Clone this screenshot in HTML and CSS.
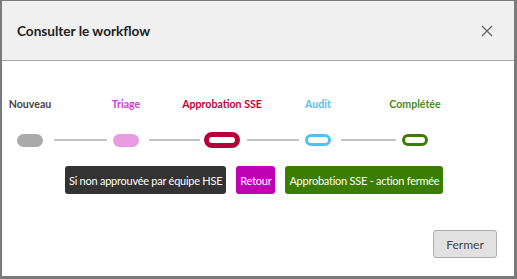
FILE: index.html
```html
<!DOCTYPE html>
<html lang="fr">
<head>
<meta charset="utf-8">
<title>Consulter le workflow</title>
<link rel="stylesheet" href="styles.css">
</head>
<body>
<div class="modal">
  <div class="modal-header">
    <h1 class="modal-title">Consulter le workflow</h1>
    <button class="close" aria-label="Fermer">
      <svg width="12" height="12" viewBox="0 0 12 12"><path d="M1 1L11 11M11 1L1 11" stroke="#666" stroke-width="1.3" fill="none"/></svg>
    </button>
  </div>
  <div class="modal-body">
    <div class="track">
      <div class="step">
        <span class="label c-new">Nouveau</span>
        <span class="pill-box"><span class="pill p-new"></span></span>
      </div>
      <span class="line l1"></span>
      <div class="step">
        <span class="label c-triage">Triage</span>
        <span class="pill-box"><span class="pill p-triage"></span></span>
      </div>
      <span class="line l2"></span>
      <div class="step step-active">
        <span class="label c-sse">Approbation SSE</span>
        <span class="pill-box"><span class="pill p-sse"></span></span>
      </div>
      <span class="line l3"></span>
      <div class="step">
        <span class="label c-audit">Audit</span>
        <span class="pill-box"><span class="pill p-audit"></span></span>
      </div>
      <span class="line l4"></span>
      <div class="step">
        <span class="label c-done">Complétée</span>
        <span class="pill-box"><span class="pill p-done"></span></span>
      </div>
    </div>
    <div class="actions">
      <button class="act a-dark">Si non approuvée par équipe HSE</button>
      <button class="act a-back">Retour</button>
      <button class="act a-green">Approbation SSE - action fermée</button>
    </div>
  </div>
  <div class="modal-footer">
    <button class="btn-close">Fermer</button>
  </div>
</div>
</body>
</html>
```
FILE: styles.css
```css
html, body {
  margin: 0;
  padding: 0;
}
body {
  background: #7a7a7a;
  width: 517px;
  height: 279px;
  overflow: hidden;
  font-family: "Segoe UI", Lato, "Noto Sans", sans-serif;
}
.modal {
  margin: 1px 0 0 2px;
  width: 512px;
  height: 275px;
  background: #fff;
  display: flex;
  flex-direction: column;
}
.modal-header {
  height: 59px;
  background: #f0f0f0;
  border-bottom: 1px solid #a9a9a9;
  display: flex;
  align-items: center;
  justify-content: space-between;
  padding: 0 21px 0 15px;
}
.modal-title {
  margin: 0;
  font-size: 13.6px;
  font-weight: 700;
  color: #222;
}
.close {
  border: 0;
  background: none;
  padding: 0;
  display: flex;
}
.modal-body {
  flex: 1;
  display: flex;
  flex-direction: column;
}
.track {
  display: flex;
  align-items: flex-end;
  padding: 36px 0 0 15px;
}
.step {
  width: 26px;
  display: flex;
  flex-direction: column;
  align-items: center;
  gap: 21px;
}
.step-active {
  width: 36px;
}
.label {
  white-space: nowrap;
  font-size: 10.6px;
  font-weight: 700;
  line-height: 14px;
}
.c-new { color: #444; }
.c-triage { color: #d13fc6; }
.c-sse { color: #c4003d; }
.c-audit { color: #4cc3f2; }
.c-done { color: #4b8b1c; }
.pill-box {
  height: 16px;
  display: flex;
  align-items: center;
}
.pill {
  display: block;
  box-sizing: border-box;
  width: 26px;
  height: 13px;
  border-radius: 7px;
}
.p-new { background: #aaaaaa; }
.p-triage { background: #e79ce0; }
.p-sse {
  width: 36px;
  height: 16px;
  border-radius: 8px;
  border: 5px solid #b5003a;
  background: #fff;
}
.p-audit { height: 12px; border: 3px solid #4cc3f2; background: #fff; }
.p-done { height: 12px; border: 3px solid #3e7b05; background: #fff; }
.line {
  height: 2px;
  background: #c4c4c4;
  margin-bottom: 7px;
}
.l1 { width: 53px; margin-left: 11px; margin-right: 6px; }
.l2 { width: 51px; margin-left: 10px; margin-right: 4px; }
.l3 { width: 52px; margin-left: 7px; margin-right: 6px; }
.l4 { width: 55px; margin-left: 10px; margin-right: 6px; }
.actions {
  display: flex;
  gap: 10px;
  padding: 18px 0 0 63px;
}
.act {
  border: 0;
  border-radius: 3px;
  color: #fff;
  font-family: inherit;
  font-size: 11px;
  letter-spacing: -0.25px;
  height: 28px;
  padding: 0 4px;
}
.a-dark { background: #333; }
.a-back { background: #c000b3; }
.a-green { background: #3b7d00; }
.modal-footer {
  display: flex;
  justify-content: flex-end;
  padding: 0 17px 18px 0;
}
.btn-close {
  width: 64px;
  height: 28px;
  background: #e1e1e1;
  border: 1px solid #adadad;
  border-radius: 3px;
  color: #444;
  font-family: inherit;
  font-size: 12px;
}
```
